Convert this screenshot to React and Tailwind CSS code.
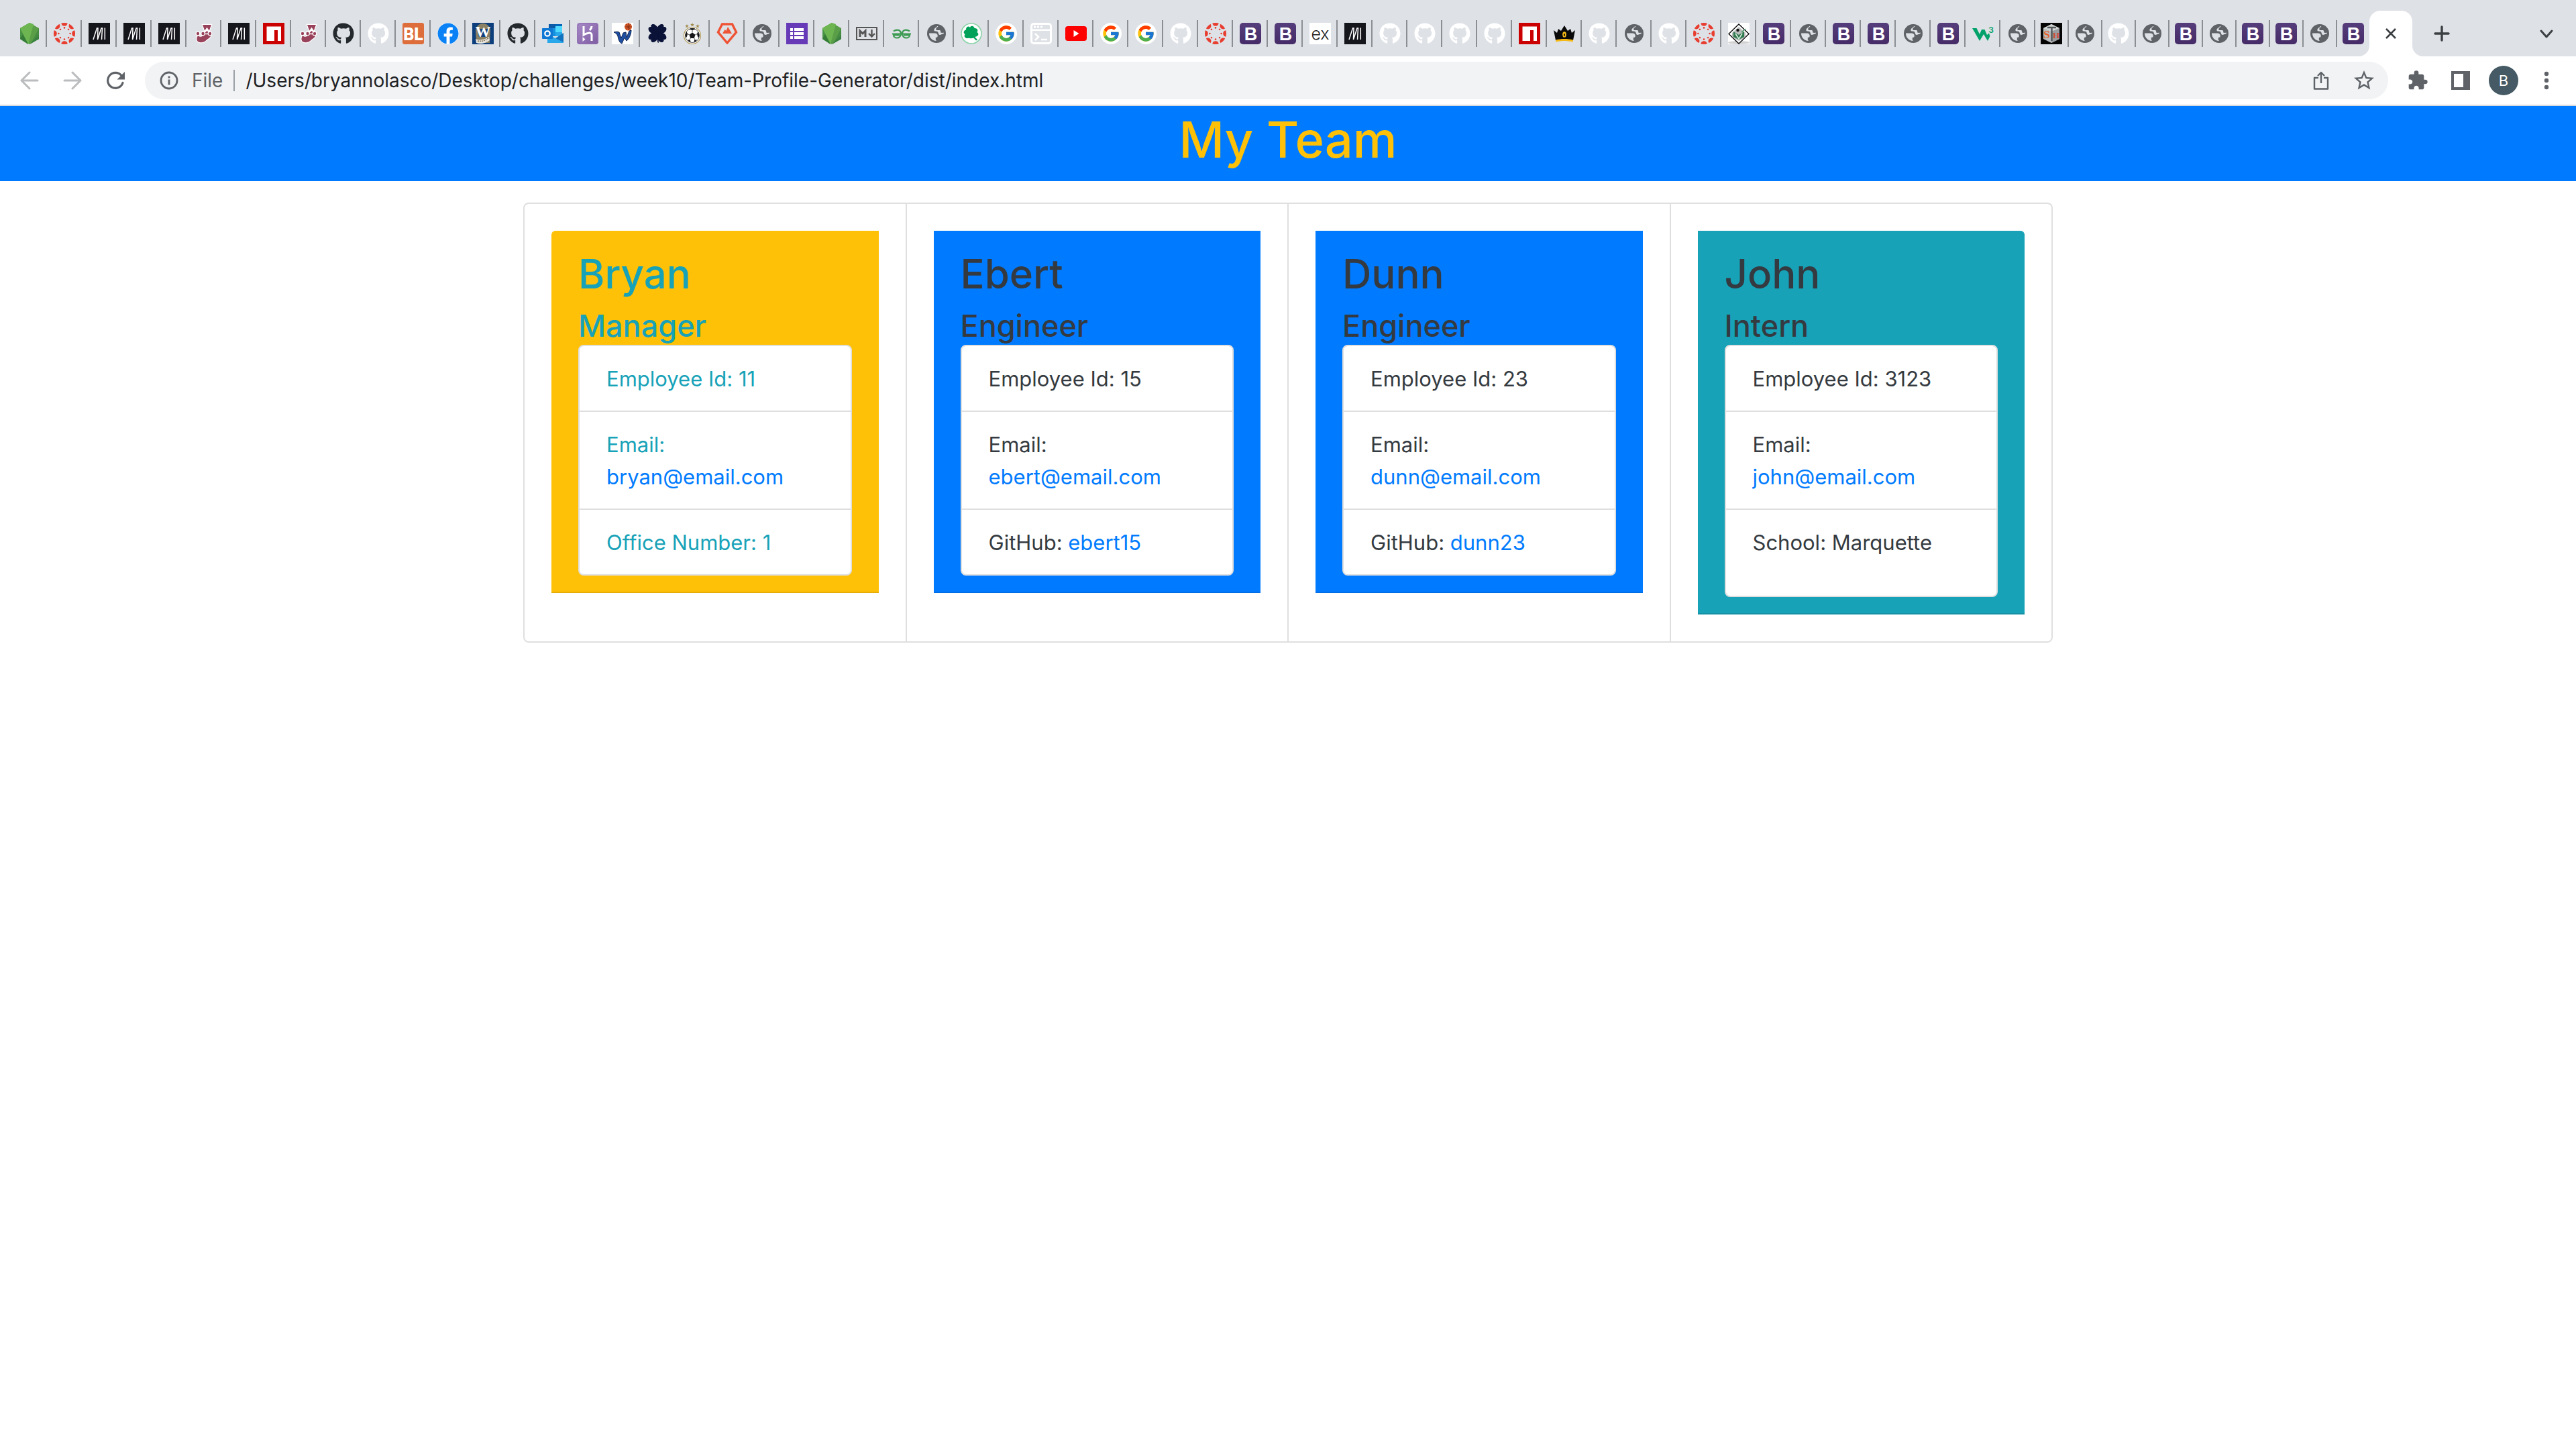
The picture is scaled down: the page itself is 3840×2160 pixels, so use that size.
import React from "react";
import { FaGithub, FaFacebook } from "react-icons/fa";
import { FcGoogle } from "react-icons/fc";
import { MdExtension, MdStarOutline } from "react-icons/md";

function Icon({ children, title }) {
  return (
    <svg className="block size-8 shrink-0" viewBox="0 0 32 32" role="img" aria-label={title}>
      {children}
    </svg>
  );
}

const Node = () => (
  <Icon title="Node.js">
    <path d="M16 0 30 8v16L16 32 2 24V8z" fill="#5a9e48" />
    <path d="M16 0 2 8v12z" fill="#76b954" />
    <path d="M16 0 22 2 14 32 2 8z" fill="#6db551" />
    <path d="M2 8v16l12 8z" fill="#4a9447" />
    <path d="M2 24 6 17l8 15z" fill="#367c39" />
    <path d="M30 8v16l-12 7z" fill="#468c43" />
    <path d="M30 18v6l-14 8z" fill="#3a8040" />
  </Icon>
);

const RING = [0, 45, 90, 135, 180, 225, 270, 315];
const Canvas = () => (
  <Icon title="Canvas">
    <defs>
      <clipPath id="ring">
        <circle cx="16" cy="16" r="16" />
      </clipPath>
    </defs>
    <g clipPath="url(#ring)" fill="#e73c2e">
      {RING.map((a) => (
        <g key={a} transform={`rotate(${a} 16 16)`}>
          <circle cx="16" cy="0" r="4.8" />
          <circle cx="16" cy="7.4" r="1.3" />
        </g>
      ))}
    </g>
  </Icon>
);

const Slant = () => (
  <Icon title="Slanted bars">
    <path d="M0 0h32v32H0z" fill="#15151c" />
    <path d="M7 25 12.500 8H14l-.5 17L19 8h1.500l-1 17M24.300 7.500V25" fill="none" stroke="#fff" strokeWidth="1.500" />
  </Icon>
);

const Jest = () => (
  <Icon title="Jest">
    <g stroke="#fff" strokeWidth="2.400" strokeLinejoin="round" fill="#99425b" paintOrder="stroke">
      <path d="M14 3h13l-3.500 9.500-3-4.500-3 4.500z" />
      <path d="M7 19c3 3 8 2 8-2l5.500-5 5.500 5c1.500 4-3 6-6 8.500-4 4-9 4.500-12 3-3.500-2-3-6-1-9.500z" />
      <circle cx="7" cy="16" r="2.200" />
      <circle cx="14.500" cy="16" r="2.200" />
      <circle cx="25" cy="16" r="2.200" />
    </g>
    <path d="m16.500 14 4-6 4 6" fill="none" stroke="#fff" strokeWidth="1.500" />
    <path d="M9.500 16.500h2.500M17.500 16.500H22" stroke="#fff" strokeWidth="1.500" />
  </Icon>
);

const Npm = () => (
  <Icon title="npm">
    <path d="M0 0h32v32H0z" fill="#cb0000" />
    <path d="M5.500 5.500h21.500v21.500h-5V11h-5v16H5.500z" fill="#fff" />
  </Icon>
);

const GitDark = () => <FaGithub className="block size-8 shrink-0 text-[#24292e]" title="GitHub" />;
const GitLight = () => <FaGithub className="block size-8 shrink-0 text-white" title="GitHub" />;

const Badge = () => (
  <Icon title="BL">
    <rect width="32" height="32" rx="3" fill="#dd6e3b" />
    <text x="16" y="25.500" textAnchor="middle" fontFamily="Roboto, sans-serif" fontWeight="900" fontSize="25" fill="#fff">BL</text>
  </Icon>
);

const Facebook = () => (
  <span className="block size-8 shrink-0 rounded-full bg-white">
    <FaFacebook className="block size-8 text-[#0a82f5]" title="Facebook" />
  </span>
);

const College = () => (
  <Icon title="College">
    <path d="M0 0h32v32H0z" fill="#0c3f7c" />
    <path d="M5 12A11 11 0 0 1 27 12L26 30H6z" fill="#8a8064" />
    <path d="M8 9h16l-2 12H10z" fill="#12407c" />
    <text x="16" y="21" textAnchor="middle" fontFamily="Liberation Serif, serif" fontWeight="700" fontSize="23" fill="#fff">W</text>
    <path d="M5 24c6 3 14 1 20-3l1 5c-7 5-13 6-20 4z" fill="#e9e6df" />
    <path d="M8 27c6 1 11 0 16-4" stroke="#7a6a4a" strokeWidth="1.500" strokeDasharray="2 1" fill="none" />
  </Icon>
);

const Outlook = () => (
  <Icon title="Outlook">
    <path d="M10 2h20v18H10z" fill="#1490df" />
    <path d="M10 2h10v6H10z" fill="#0a5aa8" />
    <path d="M20 2h10v6H20z" fill="#0364b8" />
    <path d="M20 5h10v9H20z" fill="#50d9ff" />
    <path d="M20 14h10v6H20z" fill="#28a8ea" />
    <path d="M8 30V16l12 7 12-7v14z" fill="#28a8ea" />
    <path d="m32 15-12 8 12 6z" fill="#1272bd" />
    <rect y="8" width="16" height="16" rx="1" fill="#0f78d4" />
    <circle cx="8" cy="16" r="3.700" fill="none" stroke="#fff" strokeWidth="2.200" />
  </Icon>
);

const Heroku = () => (
  <Icon title="Heroku">
    <defs>
      <linearGradient id="heroku" x2="1" y2="1">
        <stop stopColor="#a98bc8" />
        <stop offset="1" stopColor="#7c5aa0" />
      </linearGradient>
    </defs>
    <rect width="32" height="32" rx="4" fill="url(#heroku)" />
    <rect x="1.500" y="1.500" width="29" height="29" rx="3" fill="none" stroke="#8d6bb0" />
    <path d="M10 5v13c4-2.500 12-5 12 0v9M22 5c0 2.500-1.500 4.500-3 6" fill="none" stroke="#fff" strokeWidth="3" />
    <path d="m8.500 21 4 3.500-4 3.500z" fill="#fff" />
  </Icon>
);

const Hoops = () => (
  <Icon title="Basketball">
    <path d="M0 0h32v32H0z" fill="#fff" />
    <path d="M3 14c3-1 6-1 8 0l3 9 3-8 4-1 1 8 4-10 3-1c0 7-4 14-7 16l-3-5-4 9c-4-2-5-6-6-11-1-3-3-5-6-6z" fill="#1f4ea3" stroke="#0f2550" />
    <circle cx="24.500" cy="6" r="5.500" fill="#d9592a" />
    <path d="M19 6h11M24.500 0v11M21 2c3 2 3 6 0 8M28 2c-3 2-3 6 0 8" stroke="#7b2c12" strokeWidth=".8" fill="none" />
  </Icon>
);

const CloverDark = () => (
  <Icon title="Clover">
    <g fill="#0a1238">
      {[45, 135, 225, 315].map((a) => (
        <path key={a} d="M16 17C8.500 12 8 5 11 1.500c2-2 4.500-1 5 1 .5-2 3-3 5-1C24 5 23.500 12 16 17z" transform={`rotate(${a} 16 15.500)`} />
      ))}
      <path d="m15.500 15 1 0 1.500 15-2-1z" />
    </g>
  </Icon>
);

const Soccer = () => (
  <Icon title="Soccer">
    <path
      d="m16 0 .8 2h2l-1.600 1.400.6 2L16 4.200l-1.800 1.200.6-2L13.200 2h2zM8 2l.8 2h2L9.200 5.400l.6 2L8 6.200 6.200 7.400l.6-2L5.200 4h2zM24 2l.8 2h2l-1.600 1.400.6 2L24 6.200l-1.800 1.200.6-2L21.200 4h2z"
      fill="#a08a4a"
    />
    <circle cx="16" cy="19" r="12.500" fill="#fff" stroke="#b09a58" strokeWidth="1.200" />
    <circle cx="16" cy="19" r="10.500" fill="#fff" stroke="#222" strokeWidth=".8" />
    <g fill="#16161a">
      <path d="m16 14.500 4.500 3.300-1.700 5.200h-5.600l-1.700-5.200z" />
      <path d="m11 9.500 5 1.500 5-1.500-2-1.300h-6zM5.500 18l2-5 1.500 3.500-1 4-1.500 2zM26.500 18l-2-5-1.500 3.500 1 4 1.500 2zM9 25l4 1 .5 3-3-1.500zM23 25l-4 1-.5 3 3-1.500z" />
    </g>
    <path d="M16 11v3.500M20.500 17.800l3-1.300M18.800 23l1.500 3M13.200 23l-1.500 3M11.500 17.800l-3-1.300" stroke="#222" strokeWidth=".8" />
  </Icon>
);

const Pentagon = () => (
  <Icon title="Trail">
    <path d="M8.500 2h15l6 12L16 30 2.500 14z" fill="none" stroke="#ee5335" strokeWidth="3.400" />
    <path d="m9 16 3.500-6 2 2L17 6l6 10z" fill="#ee5335" />
  </Icon>
);

const Globe = () => (
  <Icon title="Page">
    <circle cx="16" cy="16" r="14" fill="#5f6368" />
    <path d="M5 15.500h8.300c2.700 0 4.500 1.600 4.500 4 0 1.700-1.200 2.500-3 2.500v3c0 .9.600 1.500 1.400 1.900C9.800 27 5 22 5 15.500z" fill="#dee1e6" />
    <path d="M17 5.100c-.3 1.300-1.500 1.600-2.700 2.500-2 1.600-2.700 4.200-.7 5 1.700.5 3.700-.3 4.700 1.400.8 1.500.3 3.500 2.300 3.900 1.600.3 3-1.300 6.100-1.700.6-4.500-1.600-8.200-4.700-9.900C20.400 5.400 18.700 5 17 5.100z" fill="#dee1e6" />
    <path d="M18.500 4.500c-.4 1.800-1.700 2.500-3 3.300v3.200h5.200c1 0 1.500 1 1.500 2v1.500c1.800.6 3.500.4 5 0C27.500 9 24 4.500 18.500 4.500z" fill="#5f6368" />
  </Icon>
);

const Forms = () => (
  <Icon title="Forms">
    <path d="M0 0h32v32H0z" fill="#673ab7" />
    <path d="M6 8h4v4H6zM12 8h14v4H12zM6 14h4v4H6zM12 14h14v4H12zM6 20h4v4H6zM12 20h14v4H12z" fill="#fff" />
  </Icon>
);

const Markdown = () => (
  <Icon title="Markdown">
    <rect x="1" y="7" width="30" height="18" fill="none" stroke="#555" strokeWidth="2" />
    <path d="M6 21v-9l4 4 4-4v9" fill="none" stroke="#555" strokeWidth="3" />
    <path d="M23.500 10v9M19 16l4.500 4.500L28 16" fill="none" stroke="#555" strokeWidth="2.400" />
  </Icon>
);

const Geeks = () => (
  <Icon title="Geeks">
    <path d="M4 12.500c6-4 11-1 11 3.500s-3 6.500-6 6.500-5-2-5-4h9M28 12.500c-6-4-11-1-11 3.500s3 6.500 6 6.500 5-2 5-4h-9M2 16.500h28" fill="none" stroke="#3c9a52" strokeWidth="2.200" />
  </Icon>
);

const CloverGreen = () => (
  <Icon title="Shamrock">
    <circle cx="16" cy="16" r="15" fill="#fff" stroke="#8ad3a8" strokeWidth="1.600" />
    <g fill="#00a25a">
      {[350, 80, 260].map((a) => (
        <path key={a} d="M15.500 17C9 14 8 9 10 6.500c1.500-2 4-2 5.500 0 1.500-2 4-2 5.500 0 2 2.500 1 7.500-5.500 10.500z" transform={`rotate(${a} 15.500 15.500)`} />
      ))}
      <path d="M8 17h14v4c-4 3-10 3-13 0z" />
      <path d="m16 16 9 9-2 1.500-8-9z" />
    </g>
  </Icon>
);

const Google = () => (
  <span className="flex size-8 shrink-0 items-center justify-center rounded-full bg-white">
    <FcGoogle className="size-7" title="Google" />
  </span>
);

const Terminal = () => (
  <Icon title="Terminal">
    <rect x="1.500" y="1.500" width="29" height="29" rx="3.500" fill="#dee1e6" stroke="#fff" strokeWidth="3" />
    <path d="M3 9.500h26v2.500H3z" fill="#fff" />
    <path d="M5 4.500h3v3H5zM10 4.500h3v3h-3zM15 4.500h3v3h-3z" fill="#fff" />
    <path d="m7 16 5 5-5 5M16 25h9" fill="none" stroke="#fff" strokeWidth="2.600" />
  </Icon>
);

const YouTube = () => (
  <Icon title="YouTube">
    <rect y="5" width="32" height="22" rx="4" fill="#f00" />
    <path d="m12.500 11 8 5-8 5z" fill="#fff" />
  </Icon>
);

const Boot = () => (
  <Icon title="Bootstrap">
    <defs>
      <linearGradient id="boot" x2="0" y2="1">
        <stop stopColor="#563d7c" />
        <stop offset="1" stopColor="#452c67" />
      </linearGradient>
    </defs>
    <rect width="32" height="32" rx="5" fill="url(#boot)" />
    <text x="16.500" y="25.500" textAnchor="middle" fontFamily="Liberation Sans, Arial, sans-serif" fontWeight="700" fontSize="27" fill="#fff">B</text>
  </Icon>
);

const Express = () => (
  <Icon title="Express">
    <path d="M0 0h32v32H0z" fill="#fff" />
    <text x="16" y="25" textAnchor="middle" fontFamily="Inter, sans-serif" fontWeight="300" fontSize="25" fill="#222">ex</text>
  </Icon>
);

const Crown = () => (
  <Icon title="Crown">
    <path d="M0 11l5 4 2-6 4 3L16 4l5 8 4-3 2 6 5-4-3 15H3z" fill="#0a0a0a" />
    <path d="M3 25.500c8-2 18-2 26 0l-.5 3c-8-2-17-2-25 0z" fill="#f5b916" />
    <ellipse cx="16" cy="17.500" rx="2.800" ry="4.200" fill="#f5b916" />
    <ellipse cx="16" cy="18" rx="1" ry="2" fill="#0a0a0a" />
  </Icon>
);

const Diamond = () => (
  <Icon title="Books">
    <path d="M0 0h32v32H0z" fill="#fff" />
    <ellipse cx="16" cy="29.500" rx="16" ry="2.500" fill="#d2d2d2" />
    <path d="M16 2 31 16.500 16 31 1 16.500z" fill="#fff" stroke="#111" strokeWidth="1.500" />
    <path d="M16 6 26 15v6l-10 6-10-6v-6z" fill="#b9bcbb" />
    <path d="m8 13 8 5 8-5v8l-8 4-8-4z" fill="#2f7a4d" />
    <path d="m11 16 5 8 5-8" fill="none" stroke="#d9eadf" strokeWidth="1.600" />
    <circle cx="14.500" cy="11" r="2.200" fill="#111" />
    <path d="m20 14 6-5" stroke="#4a9b67" strokeWidth="1.500" />
  </Icon>
);

const W3 = () => (
  <Icon title="W3Schools">
    <path d="M0 8h6.500L11 17l3-7h4.500l3.500 8 3-2.500L26.500 20 23 27l-6-10-6 10z" fill="#04a26b" />
    <text x="28" y="15" textAnchor="middle" fontFamily="Inter, sans-serif" fontWeight="600" fontSize="12" fill="#04a26b">3</text>
  </Icon>
);

const Sth = () => (
  <Icon title="STH">
    <path d="M0 0h32v32H0z" fill="#050505" />
    <path d="m16 2 12 6v16l-12 6-12-6V8z" fill="#b9bcbd" />
    <path d="m16 2 12 6-12 5L4 8z" fill="#d3d6d6" />
    <path d="m16 13 12-5v16l-12 6z" fill="#9a9d9f" />
    <path d="M10 7h13M16.500 7v20" stroke="#55585a" strokeWidth="2.500" />
    <text x="9" y="23" textAnchor="middle" fontFamily="Liberation Serif, serif" fontWeight="700" fontSize="17" fill="#e5622b">S</text>
    <text x="23" y="23" textAnchor="middle" fontFamily="Liberation Serif, serif" fontWeight="700" fontSize="13" fill="#cf4a32">H</text>
  </Icon>
);

const TABS = [
  Node, Canvas, Slant, Slant, Slant, Jest, Slant, Npm, Jest, GitDark,
  GitLight, Badge, Facebook, College, GitDark, Outlook, Heroku, Hoops, CloverDark, Soccer,
  Pentagon, Globe, Forms, Node, Markdown, Geeks, Globe, CloverGreen, Google, Terminal,
  YouTube, Google, Google, GitLight, Canvas, Boot, Boot, Express, Slant, GitLight,
  GitLight, GitLight, GitLight, Npm, Crown, GitLight, Globe, GitLight, Canvas, Diamond,
  Boot, Globe, Boot, Boot, Globe, Boot, W3, Globe,
];
const NARROW_TABS = [Sth, Globe, GitLight, Globe, Boot, Globe, Boot, Boot, Globe, Boot];

function TabStrip() {
  return (
    <div className="flex h-[84px] items-end overflow-hidden bg-[#dee1e6] pl-[18px] text-[#3c4043]">
      {TABS.map((T, i) => (
        <button key={i} type="button" className="flex h-[68px] w-[52px] shrink-0 items-center justify-between pl-2.5">
          <T />
          <span className="h-10 w-0.5 bg-[#8b8e93]" />
        </button>
      ))}
      {NARROW_TABS.map((T, i) => (
        <button key={i} type="button" className="flex h-[68px] w-[50px] shrink-0 items-center justify-between pl-2">
          <T />
          {i < NARROW_TABS.length - 1 && <span className="h-10 w-0.5 bg-[#8b8e93]" />}
        </button>
      ))}
      <div className="relative -ml-0.5 flex h-[68px] w-16 shrink-0 items-center justify-center rounded-t-2xl bg-white">
        <svg className="absolute bottom-0 -left-4 size-4" viewBox="0 0 16 16" aria-hidden="true">
          <path d="M16 0v16H0A16 16 0 0 0 16 0z" fill="#fff" />
        </svg>
        <svg className="absolute -right-4 bottom-0 size-4" viewBox="0 0 16 16" aria-hidden="true">
          <path d="M0 0v16h16A16 16 0 0 1 0 0z" fill="#fff" />
        </svg>
        <button type="button" aria-label="Close tab">
          <svg className="size-4" viewBox="0 0 16 16" fill="none" stroke="currentColor" strokeWidth="2.6">
            <path d="m1 1 14 14M15 1 1 15" />
          </svg>
        </button>
      </div>
      <button type="button" aria-label="New tab" className="ml-8 flex h-[68px] items-center">
        <svg className="size-6" viewBox="0 0 24 24" fill="none" stroke="currentColor" strokeWidth="3.4" strokeLinecap="round">
          <path d="M12 2v20M2 12h20" />
        </svg>
      </button>
      <button type="button" aria-label="Search tabs" className="mr-[34px] ml-auto flex h-[68px] items-center">
        <svg className="size-5" viewBox="0 0 20 20" fill="none" stroke="currentColor" strokeWidth="3" strokeLinecap="round" strokeLinejoin="round">
          <path d="m2 6 8 9 8-9" />
        </svg>
      </button>
    </div>
  );
}

const line = { fill: "none", stroke: "currentColor", strokeWidth: 3, strokeLinecap: "round", strokeLinejoin: "round" };

function Toolbar() {
  return (
    <div className="flex h-[74px] items-center border-b-2 border-[#dadce0] bg-white px-[30px] text-[#5f6368]">
      <button type="button" aria-label="Back" className="mr-9 text-[#babcbe]">
        <svg className="size-7" viewBox="0 0 28 28" {...line}><path d="M26 14H3M14 2 2 14l12 12" /></svg>
      </button>
      <button type="button" aria-label="Forward" className="mr-9 text-[#babcbe]">
        <svg className="size-7" viewBox="0 0 28 28" {...line}><path d="M2 14h23M14 2l12 12-12 12" /></svg>
      </button>
      <button type="button" aria-label="Reload" className="mr-[30px]">
        <svg className="size-7" viewBox="0 0 28 28" fill="none" stroke="currentColor" strokeWidth="3.200">
          <path d="M23 6.500A11.500 11.500 0 1 0 25 17.500" strokeLinecap="round" />
          <path d="M28 1v11.500H16.500z" fill="currentColor" stroke="none" />
        </svg>
      </button>
      <div className="flex h-14 flex-1 items-center rounded-full bg-[#f1f3f4] pr-[18px] pl-[22px]">
        <button type="button" aria-label="Site information">
          <svg className="size-7" viewBox="0 0 28 28" fill="none" stroke="currentColor" strokeWidth="2.800">
            <circle cx="14" cy="14" r="12" />
            <path d="M14 12.500v8M14 7.500v3" />
          </svg>
        </button>
        <span className="ml-5 text-[28px] leading-10">File</span>
        <span className="mx-4 h-8 w-0.5 bg-[#9aa0a6]" />
        <input
          aria-label="Address"
          readOnly
          className="h-10 min-w-0 flex-1 bg-transparent text-[28px] leading-10 text-[#202124] outline-none"
          value="/Users/bryannolasco/Desktop/challenges/week10/Team-Profile-Generator/dist/index.html"
        />
        <button type="button" aria-label="Share" className="mr-8">
          <svg className="size-7" viewBox="0 0 28 28" fill="none" stroke="currentColor" strokeWidth="2.400" strokeLinejoin="round">
            <path d="M10 10H4v16.500h20V10h-6M14 18V2M9 7l5-5 5 5" />
          </svg>
        </button>
        <button type="button" aria-label="Bookmark">
          <MdStarOutline className="size-9" />
        </button>
      </div>
      <button type="button" aria-label="Extensions" className="ml-7">
        <MdExtension className="size-8" />
      </button>
      <button type="button" aria-label="Side panel" className="ml-[34px]">
        <svg className="size-7" viewBox="0 0 28 28"><path d="M0 0h28v28H0zM4 4v20h14V4z" fill="currentColor" fillRule="evenodd" /></svg>
      </button>
      <button type="button" className="ml-7 flex size-11 items-center justify-center rounded-full bg-[#455a64] text-[22px] text-white">B</button>
      <button type="button" aria-label="Menu" className="ml-7">
        <svg className="size-7" viewBox="0 0 28 28" fill="currentColor">
          <circle cx="14" cy="4" r="3.200" /><circle cx="14" cy="14" r="3.200" /><circle cx="14" cy="24" r="3.200" />
        </svg>
      </button>
    </div>
  );
}

const TEAM = [
  { name: "Bryan", role: "Manager", id: "11", email: "bryan@email.com", label: "Office Number", value: "1", panel: "bg-[#ffc107] rounded-tl-md", tone: "text-[#17a2b8]" },
  { name: "Ebert", role: "Engineer", id: "15", email: "ebert@email.com", label: "GitHub", value: "ebert15", link: true, panel: "bg-[#007bff]", tone: "text-[#343a40]" },
  { name: "Dunn", role: "Engineer", id: "23", email: "dunn@email.com", label: "GitHub", value: "dunn23", link: true, panel: "bg-[#007bff]", tone: "text-[#343a40]" },
  { name: "John", role: "Intern", id: "3123", email: "john@email.com", label: "School", value: "Marquette", panel: "bg-[#17a2b8] rounded-tr-md", tone: "text-[#343a40]", tall: true },
];

function Member({ m }) {
  return (
    <article className="flex-1 border-2 border-l-0 border-[#dfdfdf] p-10 first:rounded-l-lg first:border-l-2 last:rounded-r-lg">
      <div className={`border-b-2 border-b-black/10 px-10 pt-[26px] pb-6 ${m.panel} ${m.tone}`}>
        <h2 className="mb-3 text-[60px] leading-[76px] font-medium">{m.name}</h2>
        <h4 className="text-[45px] leading-[56px] font-medium">{m.role}</h4>
        <ul className="divide-y-2 divide-[#dfdfdf] rounded-lg border-2 border-[#dfdfdf] bg-white text-[31px] leading-[48px]">
          <li className="px-10 pt-[25px] pb-[23px]">Employee Id: {m.id}</li>
          <li className="px-10 pt-[25px] pb-[23px]">
            Email: <a className="block text-[#007bff]" href={`mailto:${m.email}`}>{m.email}</a>
          </li>
          <li className={m.tall ? "px-10 pt-[25px] pb-[55px]" : "px-10 pt-[25px] pb-[23px]"}>
            {m.label}: {m.link ? <a className="text-[#007bff]" href={`https://github.com/${m.value}`}>{m.value}</a> : m.value}
          </li>
        </ul>
      </div>
    </article>
  );
}

export default function App() {
  return (
    <div className="min-h-screen bg-white font-['Inter',sans-serif]">
      <TabStrip />
      <Toolbar />
      <header className="bg-[#007bff] pt-0.5 pb-3.5 text-center">
        <h1 className="text-[74px] leading-[96px] font-medium text-[#ffc107]">My Team</h1>
      </header>
      <main className="mx-auto mt-8 flex w-full max-w-[2280px]">
        {TEAM.map((m) => <Member key={m.name} m={m} />)}
      </main>
    </div>
  );
}
